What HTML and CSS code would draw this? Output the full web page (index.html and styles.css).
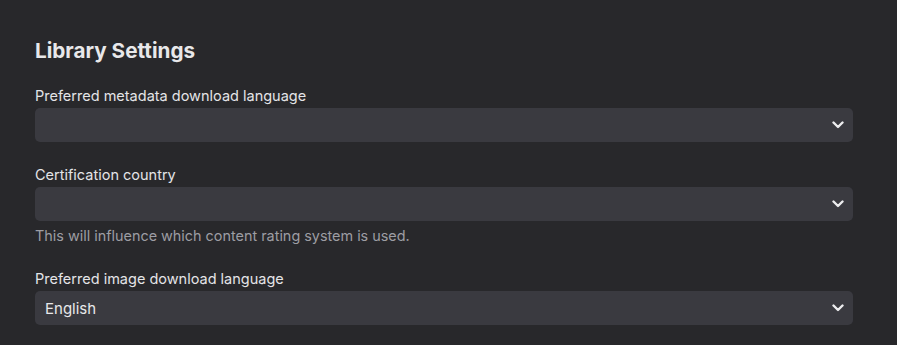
FILE: index.html
```html
<!DOCTYPE html>
<html lang="en">
<head>
    <meta charset="UTF-8">
    <meta name="viewport" content="width=device-width, initial-scale=1.0">
    <title>Library Settings</title>
    <link rel="stylesheet" href="styles.css">
</head>

<body>
    <main class="settings">
        <h2>Library Settings</h2>

        <div class="field">
            <label for="metadata-lang">Preferred metadata download language</label>
            <div class="select-wrap">
                <select id="metadata-lang">
                    <option></option>
                </select>
                <svg class="chevron" viewBox="0 0 12 8" width="12" height="8">
                    <path d="M1.5 1.5 L6 6 L10.5 1.5" />
                </svg>
            </div>
        </div>

        <div class="field">
            <label for="cert-country">Certification country</label>
            <div class="select-wrap">
                <select id="cert-country">
                    <option></option>
                </select>
                <svg class="chevron" viewBox="0 0 12 8" width="12" height="8">
                    <path d="M1.5 1.5 L6 6 L10.5 1.5" />
                </svg>
            </div>
            <p class="help">This will influence which content rating system is used.</p>
        </div>

        <div class="field">
            <label for="image-lang">Preferred image download language</label>
            <div class="select-wrap">
                <select id="image-lang">
                    <option>English</option>
                </select>
                <svg class="chevron" viewBox="0 0 12 8" width="12" height="8">
                    <path d="M1.5 1.5 L6 6 L10.5 1.5" />
                </svg>
            </div>
        </div>
    </main>
</body>
</html>
```

FILE: styles.css
```css
body {
    margin: 0;
    background: #28282b;
    color: #ececee;
    font-family: 'Inter', 'Noto Sans', sans-serif;
}

.settings {
    padding: 37px 44px 0 35px;
    display: flex;
    flex-direction: column;
}

h2 {
    margin: 0 0 21px;
    font-size: 20.7px;
    line-height: 28px;
    font-weight: 700;
    color: #e8e8ea;
}

.field {
    display: flex;
    flex-direction: column;
    margin-bottom: 23px;
}

label {
    font-size: 14.5px;
    line-height: 20px;
    font-weight: 400;
    margin-bottom: 2px;
    color: #e4e4e7;
}

.select-wrap {
    position: relative;
}

select {
    width: 100%;
    height: 34px;
    padding: 0 10px;
    border: none;
    border-radius: 5px;
    background: #3a3a40;
    color: #e8e8ea;
    font-family: inherit;
    font-size: 15px;
    appearance: none;
    -webkit-appearance: none;
}

.chevron {
    position: absolute;
    right: 9px;
    top: 13px;
    fill: none;
    stroke: #ececee;
    stroke-width: 2.4;
    stroke-linecap: round;
    stroke-linejoin: round;
}

.help {
    margin: 5px 0 0;
    font-size: 14.4px;
    line-height: 20px;
    color: #9d9da3;
}
```
